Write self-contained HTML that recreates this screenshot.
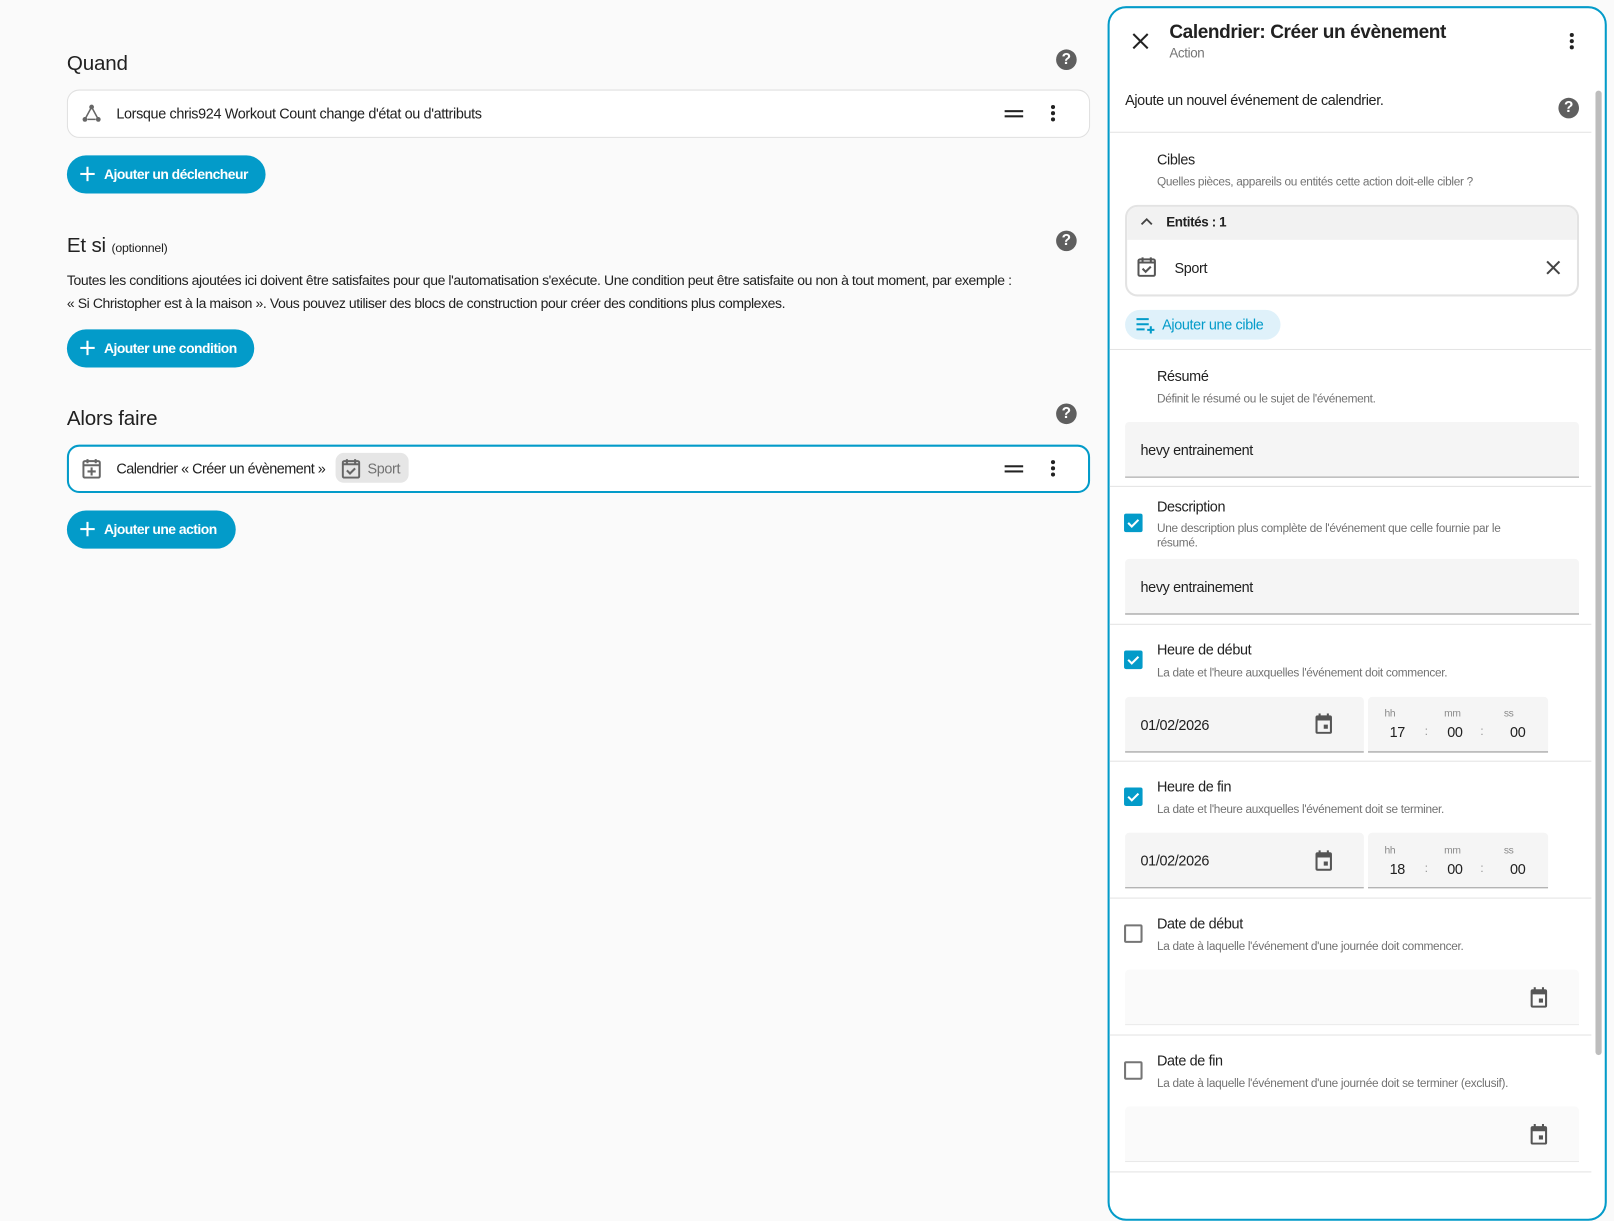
<!DOCTYPE html>
<html><head><meta charset="utf-8"><style>
*{box-sizing:border-box;margin:0;padding:0}
html,body{width:1614px;height:1188px;overflow:hidden;background:#fafafa}
#s{position:absolute;left:0;top:0;width:1568px;height:1154px;transform:scale(1.02934);transform-origin:0 0;font-family:"Liberation Sans",Arial,sans-serif;color:#212121;letter-spacing:-0.35px}
.a{position:absolute}
.h{font-size:20px;color:#212121;letter-spacing:-0.2px}
.help{position:absolute;width:20px;height:20px;border-radius:50%;background:#5f5f5f;color:#fff;font-weight:bold;font-size:15px;text-align:center;line-height:20px;letter-spacing:0}
.card{position:absolute;background:#fff;border:1px solid #e0e0e0;border-radius:12px}
.btn{position:absolute;background:#039bc9;color:#fff;font-weight:bold;font-size:13.5px;border-radius:20px;height:37px;line-height:37px;padding-left:36px;letter-spacing:-0.5px}
.btn:before{content:"";position:absolute;left:13px;top:11px;width:14px;height:14px;background:linear-gradient(#fff,#fff) center/14px 2px no-repeat,linear-gradient(#fff,#fff) center/2px 14px no-repeat}
.t14{font-size:14px}
.lbl{position:absolute;left:1124px;font-size:14px;color:#212121}
.sub{position:absolute;left:1124px;font-size:11.5px;color:#727272;line-height:14px;letter-spacing:-0.3px}
.div{position:absolute;left:1078px;width:468px;height:1px;background:#e3e3e3}
.inp{position:absolute;background:#f5f5f5;border-bottom:1px solid #8a8a8a;border-radius:4px 4px 0 0;font-size:14px}
.cb{position:absolute;left:1092px;width:18px;height:18px;border-radius:2px;background:#039bc9}
.cbo{position:absolute;left:1092px;width:18px;height:18px;border-radius:2px;border:2px solid #757575}
.sm{font-size:10px;color:#8a8a8a;position:absolute}
</style></head><body><div id="s">
<div class="a h" style="left:65px;top:51px">Quand</div>
<div class="help" style="left:1026px;top:48px">?</div>
<div class="card" style="left:65px;top:87px;width:994px;height:47px"></div>
<svg class="a" style="left:79px;top:100px" width="20" height="20" viewBox="0 0 20 20" fill="#666"><circle cx="10" cy="4" r="2.3"/><circle cx="3.5" cy="16" r="2.3"/><circle cx="16.5" cy="16" r="2.3"/><path d="M10 4L3.5 16M10 4l6.5 12M6 16h8" stroke="#666" stroke-width="1.5" fill="none"/></svg>
<div class="a t14" style="left:113px;top:102px">Lorsque chris924 Workout Count change d'état ou d'attributs</div>
<div class="a" style="left:976px;top:107px;width:18px;height:2px;background:#222;box-shadow:0 5px 0 #222"></div>
<svg class="a" style="left:1018px;top:100px" width="10" height="20"><circle cx="5" cy="4" r="2" fill="#222"/><circle cx="5" cy="10" r="2" fill="#222"/><circle cx="5" cy="16" r="2" fill="#222"/></svg>
<div class="btn" style="left:65px;top:151px;width:193px">Ajouter un déclencheur</div>

<div class="a h" style="left:65px;top:228px">Et si <span style="font-size:12px">(optionnel)</span></div>
<div class="help" style="left:1026px;top:224px">?</div>
<div class="a" style="left:65px;top:262px;width:993px;line-height:21.5px;font-size:13.6px;letter-spacing:-0.4px">Toutes les conditions ajoutées ici doivent être satisfaites pour que l'automatisation s'exécute. Une condition peut être satisfaite ou non à tout moment, par exemple :<br>« Si Christopher est à la maison ». Vous pouvez utiliser des blocs de construction pour créer des conditions plus complexes.</div>
<div class="btn" style="left:65px;top:320px;width:182px">Ajouter une condition</div>

<div class="a h" style="left:65px;top:396px">Alors faire</div>
<div class="help" style="left:1026px;top:392px">?</div>
<div class="card" style="left:65px;top:432px;width:994px;height:47px;border:2px solid #039bc9"></div>
<svg class="a" style="left:80px;top:445px" width="18" height="20" viewBox="0 0 18 20" fill="none" stroke="#666" stroke-width="2"><rect x="1" y="3" width="16" height="16" rx="1.5"/><path d="M5 1v4M13 1v4M1 7h16M9 9v8M5 13h8" /></svg>
<div class="a t14" style="left:113px;top:447px;letter-spacing:-0.5px">Calendrier « Créer un évènement »</div>
<div class="a" style="left:326px;top:440px;width:71px;height:29px;background:#e6e6e6;border-radius:8px"></div>
<svg class="a" style="left:332px;top:445px" width="18" height="20" viewBox="0 0 18 20" fill="none" stroke="#666" stroke-width="2"><rect x="1" y="3" width="16" height="16" rx="1.5"/><path d="M5 1v4M13 1v4M1 6h16M5 12l3 3 5-5"/></svg>
<div class="a t14" style="left:357px;top:447px;color:#727272">Sport</div>
<div class="a" style="left:976px;top:452px;width:18px;height:2px;background:#222;box-shadow:0 5px 0 #222"></div>
<svg class="a" style="left:1018px;top:445px" width="10" height="20"><circle cx="5" cy="4" r="2" fill="#222"/><circle cx="5" cy="10" r="2" fill="#222"/><circle cx="5" cy="16" r="2" fill="#222"/></svg>
<div class="btn" style="left:65px;top:496px;width:164px">Ajouter une action</div>

<!-- panel -->
<div class="a" style="left:1076px;top:6px;width:485px;height:1180px;background:#fff;border:2px solid #039bc9;border-radius:18px"></div>
<svg class="a" style="left:1100px;top:32px" width="16" height="16"><path d="M1 1l14 14M15 1L1 15" stroke="#222" stroke-width="2"/></svg>
<div class="a" style="left:1136px;top:20px;font-size:18.5px;font-weight:bold;color:#212121;letter-spacing:-0.4px">Calendrier: Créer un évènement</div>
<div class="a" style="left:1136px;top:44px;font-size:13px;color:#757575">Action</div>
<svg class="a" style="left:1522px;top:31px" width="10" height="20"><circle cx="5" cy="3" r="2" fill="#222"/><circle cx="5" cy="9" r="2" fill="#222"/><circle cx="5" cy="15" r="2" fill="#222"/></svg>
<div class="a t14" style="left:1093px;top:89px">Ajoute un nouvel événement de calendrier.</div>
<div class="help" style="left:1514px;top:95px">?</div>
<div class="a" style="left:1550px;top:88px;width:6px;height:937px;background:#bdbdbd;border-radius:3px"></div>
<div class="div" style="top:128px"></div>

<div class="lbl" style="top:147px">Cibles</div>
<div class="sub" style="top:170px">Quelles pièces, appareils ou entités cette action doit-elle cibler ?</div>
<div class="a" style="left:1093px;top:199px;width:441px;height:89px;border:2px solid #e3e3e3;border-radius:12px;overflow:hidden"><div style="height:32px;background:#f2f2f2"></div></div>
<svg class="a" style="left:1108px;top:211px" width="12" height="8"><path d="M1 7l5-5 5 5" stroke="#444" stroke-width="1.8" fill="none"/></svg>
<div class="a" style="left:1133px;top:208px;font-size:13px;font-weight:bold">Entités : 1</div>
<svg class="a" style="left:1105px;top:249px" width="18" height="20" viewBox="0 0 18 20" fill="none" stroke="#555" stroke-width="2"><rect x="1" y="3" width="16" height="16" rx="1.5"/><path d="M5 1v4M13 1v4M1 6h16M5 12l3 3 5-5"/></svg>
<div class="a t14" style="left:1141px;top:252px">Sport</div>
<svg class="a" style="left:1502px;top:253px" width="14" height="14"><path d="M1 1l12 12M13 1L1 13" stroke="#444" stroke-width="2"/></svg>
<div class="a" style="left:1093px;top:301px;width:151px;height:29px;background:#dff1fa;border-radius:15px"></div>
<svg class="a" style="left:1104px;top:308px" width="19" height="16"><path d="M0 2h12M0 7h12M0 12h8M14 9v7M10.5 12.5h7" stroke="#039bc9" stroke-width="2"/></svg>
<div class="a t14" style="left:1129px;top:307px;color:#039bc9">Ajouter une cible</div>
<div class="div" style="top:339px"></div>

<div class="lbl" style="top:357px">Résumé</div>
<div class="sub" style="top:381px">Définit le résumé ou le sujet de l'événement.</div>
<div class="inp" style="left:1093px;top:410px;width:441px;height:54px;padding:19px 15px">hevy entrainement</div>
<div class="div" style="top:472px"></div>

<div class="cb" style="top:499px"></div><svg class="a" style="left:1094px;top:501px" width="14" height="14"><path d="M2 7l3.5 3.5L12 4" stroke="#fff" stroke-width="2" fill="none"/></svg>
<div class="lbl" style="top:484px">Description</div>
<div class="sub" style="top:507px;width:390px">Une description plus complète de l'événement que celle fournie par le<br>résumé.</div>
<div class="inp" style="left:1093px;top:543px;width:441px;height:54px;padding:19px 15px">hevy entrainement</div>
<div class="div" style="top:606px"></div>

<div class="cb" style="top:632px"></div><svg class="a" style="left:1094px;top:634px" width="14" height="14"><path d="M2 7l3.5 3.5L12 4" stroke="#fff" stroke-width="2" fill="none"/></svg>
<div class="lbl" style="top:623px">Heure de début</div>
<div class="sub" style="top:647px">La date et l'heure auxquelles l'événement doit commencer.</div>
<div class="inp" style="left:1093px;top:677px;width:232px;height:54px;padding:19px 15px">01/02/2026</div>
<svg class="a" style="left:1277px;top:693px" width="18" height="20" viewBox="0 0 18 20" fill="#555"><path d="M3 2h12a2 2 0 012 2v14a2 2 0 01-2 2H3a2 2 0 01-2-2V4a2 2 0 012-2zm0 5v11h12V7zM4 0h2v3H4zm8 0h2v3h-2zM9 11h4v4H9z"/></svg>
<div class="inp" style="left:1329px;top:677px;width:175px;height:54px"></div>
<div class="sm" style="left:1345px;top:688px">hh</div><div class="sm" style="left:1403px;top:688px">mm</div><div class="sm" style="left:1461px;top:688px">ss</div>
<div class="a t14" style="left:1350px;top:703px">17</div><div class="a" style="left:1384px;top:703px;font-size:12px;color:#999">:</div><div class="a t14" style="left:1406px;top:703px">00</div><div class="a" style="left:1438px;top:703px;font-size:12px;color:#999">:</div><div class="a t14" style="left:1467px;top:703px">00</div>
<div class="div" style="top:739px"></div>

<div class="cb" style="top:765px"></div><svg class="a" style="left:1094px;top:767px" width="14" height="14"><path d="M2 7l3.5 3.5L12 4" stroke="#fff" stroke-width="2" fill="none"/></svg>
<div class="lbl" style="top:756px">Heure de fin</div>
<div class="sub" style="top:780px">La date et l'heure auxquelles l'événement doit se terminer.</div>
<div class="inp" style="left:1093px;top:809px;width:232px;height:54px;padding:19px 15px">01/02/2026</div>
<svg class="a" style="left:1277px;top:826px" width="18" height="20" viewBox="0 0 18 20" fill="#555"><path d="M3 2h12a2 2 0 012 2v14a2 2 0 01-2 2H3a2 2 0 01-2-2V4a2 2 0 012-2zm0 5v11h12V7zM4 0h2v3H4zm8 0h2v3h-2zM9 11h4v4H9z"/></svg>
<div class="inp" style="left:1329px;top:809px;width:175px;height:54px"></div>
<div class="sm" style="left:1345px;top:821px">hh</div><div class="sm" style="left:1403px;top:821px">mm</div><div class="sm" style="left:1461px;top:821px">ss</div>
<div class="a t14" style="left:1350px;top:836px">18</div><div class="a" style="left:1384px;top:836px;font-size:12px;color:#999">:</div><div class="a t14" style="left:1406px;top:836px">00</div><div class="a" style="left:1438px;top:836px;font-size:12px;color:#999">:</div><div class="a t14" style="left:1467px;top:836px">00</div>
<div class="div" style="top:872px"></div>

<div class="cbo" style="top:898px"></div>
<div class="lbl" style="top:889px">Date de début</div>
<div class="sub" style="top:913px">La date à laquelle l'événement d'une journée doit commencer.</div>
<div class="inp" style="left:1093px;top:942px;width:441px;height:54px;background:#fafafa;border-bottom-color:#e5e5e5"></div>
<svg class="a" style="left:1486px;top:959px" width="18" height="20" viewBox="0 0 18 20" fill="#555"><path d="M3 2h12a2 2 0 012 2v14a2 2 0 01-2 2H3a2 2 0 01-2-2V4a2 2 0 012-2zm0 5v11h12V7zM4 0h2v3H4zm8 0h2v3h-2zM9 11h4v4H9z"/></svg>
<div class="div" style="top:1005px"></div>

<div class="cbo" style="top:1031px"></div>
<div class="lbl" style="top:1022px">Date de fin</div>
<div class="sub" style="top:1046px">La date à laquelle l'événement d'une journée doit se terminer (exclusif).</div>
<div class="inp" style="left:1093px;top:1075px;width:441px;height:54px;background:#fafafa;border-bottom-color:#e5e5e5"></div>
<svg class="a" style="left:1486px;top:1092px" width="18" height="20" viewBox="0 0 18 20" fill="#555"><path d="M3 2h12a2 2 0 012 2v14a2 2 0 01-2 2H3a2 2 0 01-2-2V4a2 2 0 012-2zm0 5v11h12V7zM4 0h2v3H4zm8 0h2v3h-2zM9 11h4v4H9z"/></svg>
<div class="div" style="top:1138px"></div>
</div></body></html>
